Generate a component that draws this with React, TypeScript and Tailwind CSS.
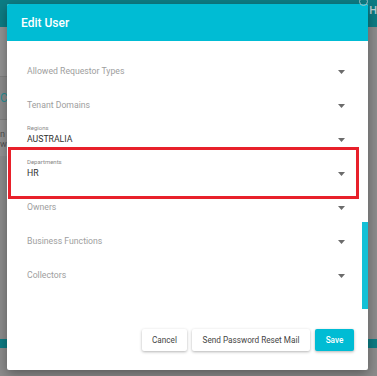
import React from 'react';

const fields = [
  { label: '', value: 'Allowed Requestor Types' },
  { label: '', value: 'Tenant Domains' },
  { label: 'Regions', value: 'AUSTRALIA' },
  { label: 'Departments', value: 'HR' },
  { label: '', value: 'Owners' },
  { label: '', value: 'Business Functions' },
  { label: '', value: 'Collectors' },
];

function Caret() {
  return (
    <svg width="7" height="4" viewBox="0 0 7 4" className="shrink-0">
      <path d="M0 0h7L3.5 4z" fill="#6b6b6b" />
    </svg>
  );
}

function Field({ label, value }: { label: string; value: string }) {
  const filled = label !== '';
  return (
    <div className="h-[34px] flex flex-col">
      <div className="h-[10px] text-[6px] leading-[10px] text-[#8a8a8a]">{label}</div>
      <div className="h-[14px] flex items-center justify-between">
        <span className={filled ? 'text-[8.7px] text-[#303030]' : 'text-[8.7px] text-[#9e9e9e]'}>{value}</span>
        <Caret />
      </div>
    </div>
  );
}

export default function App() {
  return (
    <div className="relative w-[377px] h-[376px] overflow-hidden bg-[#8c8c8c] font-['Roboto',sans-serif]">
      {/* page behind the dimmed overlay */}
      <div className="h-[27px] bg-[#0d7c84] flex justify-end items-start">
        <span className="text-[#bfcfd1] text-[11px] leading-[18px] font-medium pt-[2px]">H</span>
      </div>
      <div className="w-[8px] overflow-hidden">
        <div className="h-[50px] bg-[#939393] border-b border-[#808080]" />
        <div className="h-[43px] bg-[#8c8c8c] border-b border-[#7e7e7e] flex items-center">
          <span className="text-[#2a8f96] text-[12px]">C</span>
        </div>
        <div className="h-[36px] bg-[#939393] flex flex-col text-[9px] leading-[10px] text-[#505050] pt-[9px]">
          <span>n</span>
          <span>w</span>
        </div>
      </div>
      <div className="h-[183px]" />
      <div className="h-[9px] bg-[#0d7c84]" />

      {/* modal */}
      <div className="absolute left-[7px] top-[4px] w-[361px] h-[366px] bg-white rounded-[2px] shadow-[0_4px_12px_rgba(0,0,0,0.35)] flex flex-col overflow-hidden">
        <div className="h-[37px] bg-[#00bcd4] flex items-center px-[14px] shrink-0">
          <span className="text-white text-[12px] font-medium">Edit User</span>
        </div>
        <div className="relative flex-1 flex flex-col">
          <div className="pt-[14px] pl-[20px] pr-[23px] flex flex-col">
            {fields.map((f) => (
              <Field key={f.value} label={f.label} value={f.value} />
            ))}
          </div>
          <div className="absolute right-0 top-[181px] w-[6px] h-[87px] bg-[#13c0d6]" />
          <div className="mt-auto mb-[19px] pr-[14px] flex justify-end gap-[5px]">
            <button className="w-[45px] h-[22px] rounded-[2px] bg-white text-[8.2px] text-[#444] whitespace-nowrap shadow-[0_1px_3px_rgba(0,0,0,0.3)]">
              Cancel
            </button>
            <button className="w-[118px] h-[22px] rounded-[2px] bg-white text-[8.2px] text-[#444] whitespace-nowrap shadow-[0_1px_3px_rgba(0,0,0,0.3)]">
              Send Password Reset Mail
            </button>
            <button className="w-[39px] h-[22px] rounded-[2px] bg-[#00bcd4] text-[8.2px] font-medium text-white whitespace-nowrap shadow-[0_1px_3px_rgba(0,0,0,0.3)]">
              Save
            </button>
          </div>
        </div>
      </div>

      {/* circle icon peeking at top right */}
      <div className="absolute right-[9px] top-[-3px] w-[9px] h-[9px] rounded-full border border-[#9fbfc2]" />

      {/* annotation */}
      <div className="absolute left-[8px] top-[147px] w-[351px] h-[52px] border-[3px] border-[#e8202a]" />
    </div>
  );
}
